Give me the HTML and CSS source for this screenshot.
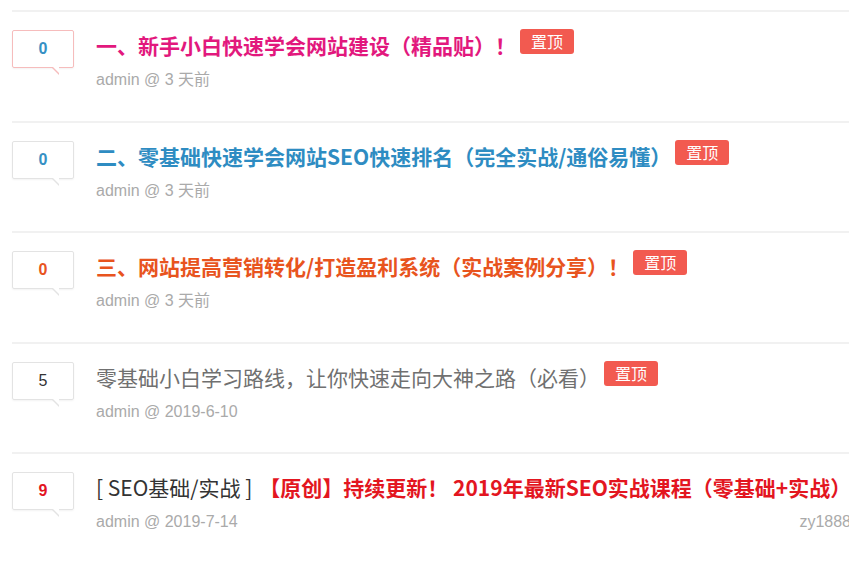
FILE: index.html
```html
<!DOCTYPE html>
<html lang="zh-CN">
<head>
  <meta charset="UTF-8">
  <meta name="viewport" content="width=device-width, initial-scale=1.0">
  <title>文章列表</title>
  <link rel="stylesheet" href="styles.css">
</head>
<body>
  <ul class="post-list">
    <li class="post">
      <div class="count count-hot blue">0</div>
      <div class="post-body">
        <div class="title"><a class="t-pink" href="#">一、新手小白快速学会网站建设（精品贴）！</a><span class="top">置顶</span></div>
        <div class="meta">admin @ 3 天前</div>
      </div>
    </li>
    <li class="post">
      <div class="count blue">0</div>
      <div class="post-body">
        <div class="title"><a class="t-blue" href="#">二、零基础快速学会网站SEO快速排名（完全实战/通俗易懂）</a><span class="top">置顶</span></div>
        <div class="meta">admin @ 3 天前</div>
      </div>
    </li>
    <li class="post">
      <div class="count orange">0</div>
      <div class="post-body">
        <div class="title"><a class="t-orange" href="#">三、网站提高营销转化/打造盈利系统（实战案例分享）！</a><span class="top">置顶</span></div>
        <div class="meta">admin @ 3 天前</div>
      </div>
    </li>
    <li class="post">
      <div class="count plain">5</div>
      <div class="post-body">
        <div class="title"><a class="t-gray" href="#">零基础小白学习路线，让你快速走向大神之路（必看）</a><span class="top">置顶</span></div>
        <div class="meta">admin @ 2019-6-10</div>
      </div>
    </li>
    <li class="post">
      <div class="count red">9</div>
      <div class="post-body">
        <div class="title"><span class="cat">[ SEO基础/实战 ]</span><a class="t-red" href="#">【原创】持续更新！ 2019年最新SEO实战课程（零基础+实战）</a></div>
        <div class="meta"><span>admin @ 2019-7-14</span><span class="author">zy1888</span></div>
      </div>
    </li>
  </ul>
</body>
</html>
```

FILE: styles.css
```css
html, body {
  overflow: hidden;
}
body {
  margin: 0;
  background: #fff;
  font-family: "Liberation Sans", "Noto Sans CJK SC", Arial, sans-serif;
  color: #333;
}
.post-list {
  list-style: none;
  margin: 10px 0 0 12px;
  padding: 0;
  width: 900px;
}
.post {
  display: flex;
  box-sizing: border-box;
  height: 110.5px;
  padding-top: 20px;
  border-top: 2px solid #f1f1f1;
}
.count {
  position: relative;
  flex-shrink: 0;
  box-sizing: border-box;
  width: 62px;
  height: 38px;
  margin-top: -2px;
  margin-right: 22px;
  border: 1px solid #e3e3e3;
  border-radius: 2px;
  box-shadow: 0 1px 2px rgba(0, 0, 0, 0.05);
  text-align: center;
  line-height: 36px;
  font-size: 16px;
  font-weight: bold;
}
.count::before,
.count::after {
  content: "";
  position: absolute;
  width: 0;
  height: 0;
  border-style: solid;
}
.count::before {
  left: 38px;
  bottom: -8px;
  border-width: 8px 0 0 8px;
  border-color: #e3e3e3 transparent transparent transparent;
}
.count::after {
  left: 40px;
  bottom: -6px;
  border-width: 6px 0 0 6px;
  border-color: #fff transparent transparent transparent;
}
.count-hot {
  border-color: #f6bcbc;
}
.count-hot::before {
  border-top-color: #f6bcbc;
}
.blue { color: #3690c4; }
.orange { color: #e8541e; }
.red { color: #e3161f; }
.plain { color: #333; font-weight: normal; }

.post-body {
  flex: 1;
  min-width: 0;
}
.title {
  display: flex;
  align-items: flex-start;
  margin-top: -2px;
  height: 30px;
  line-height: 30px;
  font-size: 21px;
  font-family: "Noto Sans CJK SC", "Liberation Sans", sans-serif;
  white-space: nowrap;
}
.title a {
  text-decoration: none;
  font-weight: bold;
}
.t-pink { color: #e2187d; }
.t-blue { color: #2e8cc2; }
.t-orange { color: #e8541e; }
.t-gray { color: #707070; font-weight: normal !important; }
.t-red { color: #e3161f; margin-left: 7px; }
.cat {
  color: #333;
}
.top {
  flex-shrink: 0;
  margin: -1px 0 0 4px;
  padding: 0 11px;
  height: 25px;
  line-height: 25px;
  border-radius: 3px;
  background: #f25a50;
  color: #fff;
  font-size: 16px;
  font-weight: normal;
}
.meta {
  display: flex;
  justify-content: space-between;
  width: 755px;
  margin-top: 8px;
  line-height: 24px;
  font-size: 16px;
  color: #aaa;
}
.author {
  color: #aaa;
}
```
